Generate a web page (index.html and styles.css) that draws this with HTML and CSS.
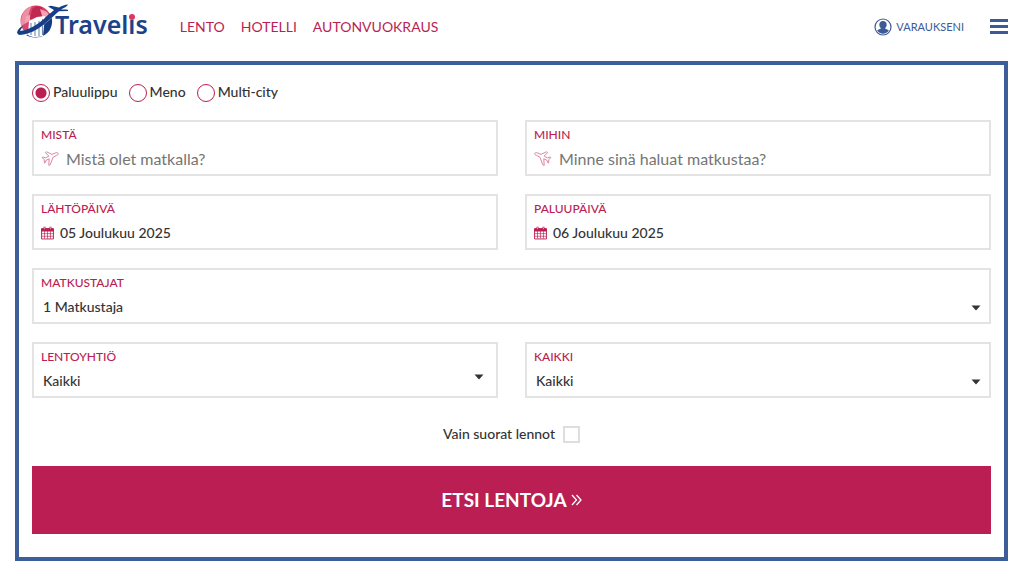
FILE: index.html
```html
<!DOCTYPE html>
<html lang="fi">
<head>
<meta charset="utf-8">
<meta name="viewport" content="width=device-width, initial-scale=1">
<title>Travelis</title>
<link rel="stylesheet" href="styles.css">
</head>
<body>
<svg class="sprite" aria-hidden="true">
  <symbol id="calendar" viewBox="0 0 14 14">
    <path d="M1 2h12v11.500H1z" fill="#fff"/>
    <path d="M.6 2.200h12.800v11.200H.6zM.6 3h12.800v1.800H.6z" fill="none" stroke="currentColor"/>
    <path d="M1 2.500h12v2.500H1z" fill="currentColor"/>
    <path d="M3.800 5v8M7 5v8M10.200 5v8M1 7.700h12M1 10.500h12" stroke="currentColor" stroke-width=".7"/>
    <path d="M3.800.3v3M10.200.3v3" stroke="currentColor" stroke-width="2"/>
    <path d="M3.800.9v2M10.200.9v2" stroke="#fff" stroke-width=".6"/>
  </symbol>
  <symbol id="caret" viewBox="0 0 10 6"><path d="M.5.500h9L5 5.500z" fill="currentColor"/></symbol>
  <symbol id="plane" viewBox="0 0 18 16">
    <path d="M17.400 2.500c-.4-1-1.900-1-3.200-.5L11 3.400 5.600.8l-1.300.7 3.500 3.600-3.100 1.800-2.700-.9-.9.500 2.100 2.200.2 3.300.9-.5.700-2.200L8.200 7.800l-.4 6.600 1.400-.6 2.900-7.600 3.500-1.800c1-.5 2-1.100 1.800-1.900z" fill="#fff" stroke="currentColor" stroke-linejoin="round"/>
  </symbol>
</svg>

<header class="header">
  <a class="logo" href="#" aria-label="Travelis">
    <svg class="logo-mark" viewBox="0 0 52 36" aria-hidden="true">
      <circle cx="20" cy="17" r="15.500" fill="#d9486e"/>
      <path d="M5 17C6 8 10 4 16 2c-3 4-4 10-4 16l-7 4z" fill="#ed8fa5"/>
      <path d="M16 5l4-3 6 1 2 8-6 3-8 1z" fill="#bf2950"/>
      <path d="M24 5l7 3 3 5-7 2zM10 12l4-1v6l-5 2z" fill="#f2a4b4"/>
      <path d="M10 31c3 2 8 3 14 2 8-2 13-9 12-18-.3-3-1-5-2-6l-6 6-2 14z" fill="#173b82"/>
      <path d="M12 31l1-14 8-4 8-1-2 20c-5 1-11 2-15-1z" fill="#fff"/>
      <path d="M15 19v12M19 18v14M23 17v15M26.500 15v16" stroke="#7188b5" stroke-width="1.100"/>
      <path d="M3 30C18 28 29 18 41 7" fill="none" stroke="#fff" stroke-width="3.500"/>
      <path d="M1 29c.3-3 3-6 6-7l-3 5c12-1 22-10 34-21l-6-3.500 3-.7 8 1.700c3-1.600 6-3 9-3-1 2-4 3.500-7 5h6l2 1.500-10 .3C32 17 19 31 3 31z" fill="#173f88"/>
    </svg>
    <span class="logo-name">Travel<span class="logo-i">i</span>s</span>
  </a>
  <nav class="nav">
    <a href="#">LENTO</a>
    <a href="#">HOTELLI</a>
    <a href="#">AUTONVUOKRAUS</a>
  </nav>
  <a class="account" href="#">
    <svg class="account-icon" viewBox="0 0 18 18" aria-hidden="true">
      <circle cx="9" cy="9" r="8" fill="#fff" stroke="currentColor" stroke-width="1.200"/>
      <path d="M9 3c2.300 0 3.700 1.600 3.700 3.800 0 1.500-.7 2.800-1.700 3.500.3 1 2.700 1 3.900 2.300C13.700 14.700 11.300 15.700 9 15.700s-4.700-1-5.900-3.100C4.300 11.300 6.700 11.300 7 10.300 6 9.600 5.300 8.300 5.300 6.800 5.300 4.600 6.700 3 9 3z" fill="currentColor"/>
    </svg>
    VARAUKSENI
  </a>
  <button class="menu" type="button" aria-label="Valikko"><span></span><span></span><span></span></button>
</header>

<main>
  <form class="search">
    <div class="trip-types">
      <label><input type="radio" name="trip" checked>Paluulippu</label>
      <label><input type="radio" name="trip">Meno</label>
      <label><input type="radio" name="trip">Multi-city</label>
    </div>
    <div class="fields">
      <div class="field">
        <label for="from">MISTÄ</label>
        <div class="control place">
          <svg class="plane" aria-hidden="true"><use href="#plane"/></svg>
          <input id="from" type="text" placeholder="Mistä olet matkalla?">
        </div>
      </div>
      <div class="field">
        <label for="to">MIHIN</label>
        <div class="control place">
          <svg class="plane plane-landing" aria-hidden="true"><use href="#plane"/></svg>
          <input id="to" type="text" placeholder="Minne sinä haluat matkustaa?">
        </div>
      </div>
      <div class="field">
        <label for="depart">LÄHTÖPÄIVÄ</label>
        <div class="control date">
          <svg class="calendar" aria-hidden="true"><use href="#calendar"/></svg>
          <input id="depart" type="text" value="05 Joulukuu 2025" readonly>
        </div>
      </div>
      <div class="field">
        <label for="return">PALUUPÄIVÄ</label>
        <div class="control date">
          <svg class="calendar" aria-hidden="true"><use href="#calendar"/></svg>
          <input id="return" type="text" value="06 Joulukuu 2025" readonly>
        </div>
      </div>
      <div class="field wide">
        <label for="travellers">MATKUSTAJAT</label>
        <div class="control choice">
          <select id="travellers"><option>1 Matkustaja</option></select>
          <svg class="caret" aria-hidden="true"><use href="#caret"/></svg>
        </div>
      </div>
      <div class="field">
        <label for="airline">LENTOYHTIÖ</label>
        <div class="control choice airline">
          <select id="airline"><option>Kaikki</option></select>
          <svg class="caret" aria-hidden="true"><use href="#caret"/></svg>
        </div>
      </div>
      <div class="field">
        <label for="cabin">KAIKKI</label>
        <div class="control choice">
          <select id="cabin"><option>Kaikki</option></select>
          <svg class="caret" aria-hidden="true"><use href="#caret"/></svg>
        </div>
      </div>
    </div>
    <label class="direct">Vain suorat lennot<input type="checkbox"></label>
    <button class="submit" type="submit">ETSI LENTOJA
      <svg class="chevrons" viewBox="0 0 11 12" aria-hidden="true"><path d="M1 1l4.500 5L1 11M5.500 1L10 6l-4.500 5" fill="none" stroke="currentColor" stroke-width="1.300"/></svg>
    </button>
  </form>
</main>
</body>
</html>
```
FILE: styles.css
```css
* { box-sizing: border-box; }

body {
  margin: 0;
  background: #fff;
  color: #333;
  font: 500 14px/20px Lato, "Liberation Sans", sans-serif;
}

a { color: inherit; text-decoration: none; }
input, select, button { font: inherit; color: inherit; }
.sprite { position: absolute; width: 0; height: 0; }

.header {
  display: flex;
  align-items: center;
  height: 53px;
  padding: 0 16px;
}

.logo {
  display: flex;
  position: relative;
  align-items: center;
  height: 44px;
  margin-bottom: 10px;
}

.logo-mark { width: 52px; height: 36px; margin-right: -13px; }

.logo-name {
  margin-top: 4px;
  color: #1d4289;
  font: 600 25px/32px "Noto Sans", sans-serif;
}

.logo-i { position: relative; }

.logo-i::after {
  content: "";
  position: absolute;
  top: 7px;
  left: 1px;
  width: 6px;
  height: 6px;
  border-radius: 50%;
  background: #e0355f;
}

.nav {
  display: flex;
  gap: 16px;
  margin-left: 32px;
  color: #ba1e53;
  font-weight: 400;
}

.account {
  display: flex;
  align-items: center;
  gap: 4px;
  margin-left: auto;
  color: #3d5a94;
  font-size: 11px;
  font-weight: 400;
}

.account-icon { width: 18px; height: 18px; }

.menu {
  display: flex;
  flex-direction: column;
  gap: 3px;
  width: 18px;
  margin-left: 26px;
  padding: 0;
  border: 0;
  background: none;
}

.menu span { height: 3px; background: #3d5a94; }

.search {
  margin: 8px 16px 16px 15px;
  padding: 17px 13px 23px;
  border: 4px solid #3d5f98;
}

.trip-types { display: flex; gap: 11px; margin-bottom: 18px; }
.trip-types label { display: flex; align-items: center; gap: 3px; }

.trip-types input {
  width: 18px;
  height: 18px;
  margin: 1px 0 0;
  appearance: none;
  border: 1px solid #ba1e53;
  border-radius: 50%;
}

.trip-types input:checked {
  background: radial-gradient(circle, #ba1e53 5px, #fff 6px);
}

.fields {
  display: grid;
  grid-template-columns: 1fr 1fr;
  gap: 18px 27px;
}

.field {
  height: 56px;
  padding: 4px 7px;
  border: 2px solid #e3e3e3;
}

.wide { grid-column: 1 / -1; }

.field label {
  display: block;
  color: #ba1e53;
  font-size: 12px;
  line-height: 18px;
  font-weight: 500;
}

.control { display: flex; align-items: center; height: 30px; }

.control input, .control select {
  flex: 1;
  min-width: 0;
  padding: 0;
  border: 0;
  background: none;
  appearance: none;
}

.place { gap: 7px; }
.place input { font-size: 16px; font-weight: 400; }
.place input::placeholder { color: #757575; }
.plane { width: 18px; height: 16px; color: #de86a1; }
.plane-landing { transform: scaleX(-1); }
.date { gap: 6px; }
.calendar { width: 13px; height: 14px; color: #ba1e53; }
.choice { position: relative; padding-left: 2px; }
.caret { position: absolute; top: 13px; right: 1px; width: 10px; height: 6px; }
.airline .caret { top: 8px; right: 5px; }

.direct {
  display: flex;
  align-items: center;
  justify-content: center;
  gap: 8px;
  margin: 26px 0 22px;
}

.direct input {
  width: 17px;
  height: 17px;
  margin: 0;
  appearance: none;
  border: 2px solid #dedede;
}

.submit {
  display: flex;
  align-items: center;
  justify-content: center;
  gap: 4px;
  width: 100%;
  height: 68px;
  border: 0;
  background: #ba1e53;
  color: #fff;
  font-size: 19px;
  font-weight: 700;
}

.chevrons { width: 11px; height: 12px; }
```
